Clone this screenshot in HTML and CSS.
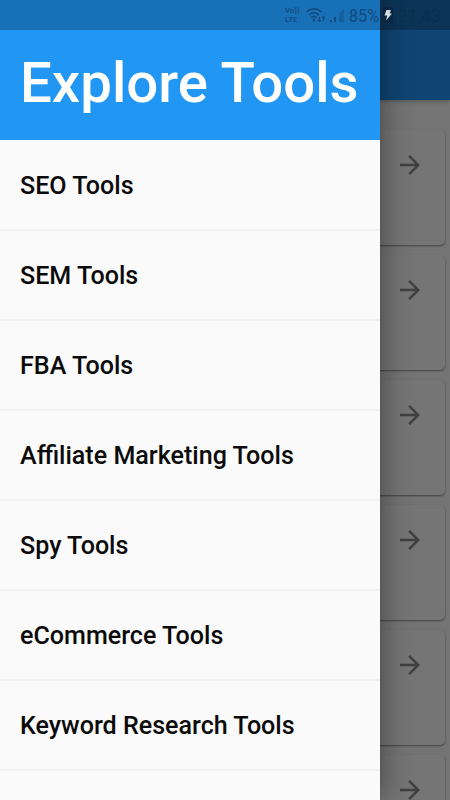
FILE: index.html
```html
<!DOCTYPE html>
<html lang="en">
<head>
<meta charset="utf-8">
<title>Explore Tools</title>
<link rel="stylesheet" href="styles.css">
</head>
<body>
<svg class="defs" width="0" height="0"><symbol id="arrow" viewBox="0 0 24 24"><path d="M12 4l-1.410 1.410L16.170 11H4v2h12.170l-5.580 5.590L12 20l8-8z"/></symbol></svg>
<div class="screen">
  <main class="page">
    <div class="appbar"></div>
    <div class="cards">
      <div class="card"><svg class="arrow"><use href="#arrow"/></svg></div>
      <div class="card"><svg class="arrow"><use href="#arrow"/></svg></div>
      <div class="card"><svg class="arrow"><use href="#arrow"/></svg></div>
      <div class="card"><svg class="arrow"><use href="#arrow"/></svg></div>
      <div class="card"><svg class="arrow"><use href="#arrow"/></svg></div>
      <div class="card"><svg class="arrow"><use href="#arrow"/></svg></div>
    </div>
  </main>
  <nav class="drawer">
    <h1 class="title">Explore Tools</h1>
    <ul class="menu">
      <li>SEO Tools</li>
      <li>SEM Tools</li>
      <li>FBA Tools</li>
      <li>Affiliate Marketing Tools</li>
      <li>Spy Tools</li>
      <li>eCommerce Tools</li>
      <li>Keyword Research Tools</li>
      <li></li>
    </ul>
  </nav>
  <div class="status">
    <span class="volte"><span>Vo))</span><span>LTE</span></span>
    <svg class="wifi" width="20" height="16" viewBox="0 0 20 16" fill="none" stroke="currentColor" stroke-width="1.500"><path d="M.5 5Q8 -1.500 15.500 5M3 8Q8 3.500 13 8M5.500 10.600Q8 8.500 10.500 10.600"/><circle cx="8" cy="13" r=".7"/><path stroke-width="1.100" d="M13.500 9.500v5M12 13l1.500 1.500L15 13M17.500 14.500v-5M16 11l1.500-1.500L19 11"/></svg>
    <svg class="signal" width="16" height="15" viewBox="0 0 16 15" fill="currentColor"><path d="M1 12h2v2H1zM5 9h2v5H5z"/><path opacity=".4" d="M10 5.500L15 .5V14h-5z"/></svg>
    <span class="percent">85%</span>
    <svg class="bolt" width="14" height="18" viewBox="0 0 14 18"><rect x="2" y="1" width="10" height="16" rx="1" fill="#092541"/><path d="M5.500 4H10L8.500 7.500H11L5 14.500L6.200 9.500H3.500Z" fill="#d5dce2"/></svg>
    <span class="time">21:43</span>
  </div>
</div>
</body>
</html>
```
FILE: styles.css
```css
* { box-sizing: border-box; }
body { margin: 0; font-family: Roboto, "Liberation Sans", sans-serif; }
.defs { display: block; }
.screen { position: relative; width: 450px; height: 800px; overflow: hidden; background: #747474; }
.appbar { height: 100px; background: #104573; box-shadow: 0 1px 4px rgba(0,0,0,.3); }
.cards { display: flex; flex-direction: column; gap: 10px; padding: 30px 5px 0; }
.card { flex: none; display: flex; justify-content: flex-end; height: 115px; padding: 20px 20px 0; border-radius: 5px; background: #757575; box-shadow: 0 1px 2px rgba(0,0,0,.45); }
.arrow { width: 30px; height: 30px; fill: #404040; }
.drawer { position: absolute; inset: 0 auto 0 0; width: 380px; background: #fafafa; box-shadow: 0 0 30px rgba(0,0,0,.45); }
.title { display: flex; align-items: center; height: 140px; margin: 0; padding: 27px 0 0 20px; background: #2196f3; color: #fff; font-size: 56.400px; font-weight: 500; line-height: 67px; white-space: nowrap; }
.menu { margin: 0; padding: 0; list-style: none; }
.menu li { display: flex; align-items: center; height: 90px; padding: 2px 20px 0; border-bottom: 1px solid #f2f2f2; color: #0b0b0b; font-size: 25.080px; font-weight: 500; white-space: nowrap; }
.menu li + li { border-top: 1px solid #f2f2f2; padding-top: 1px; }
.status { position: absolute; inset: 0 0 auto 0; display: flex; align-items: center; justify-content: flex-end; height: 30px; padding-right: 10px; background: rgba(0,0,0,.25); color: #124a7c; }
.volte { display: flex; flex-direction: column; width: 17px; margin-right: 4px; font-size: 7.800px; line-height: 9px; font-weight: 500; }
.signal { margin: 0 4px 0 3px; }
.percent { width: 31px; font-size: 19px; transform: scaleX(.85); transform-origin: left; }
.bolt { margin: 0 3px 0 1px; }
.time { width: 42px; color: #0a2e4e; font-size: 19px; transform: scaleX(.9); transform-origin: left; }
```
